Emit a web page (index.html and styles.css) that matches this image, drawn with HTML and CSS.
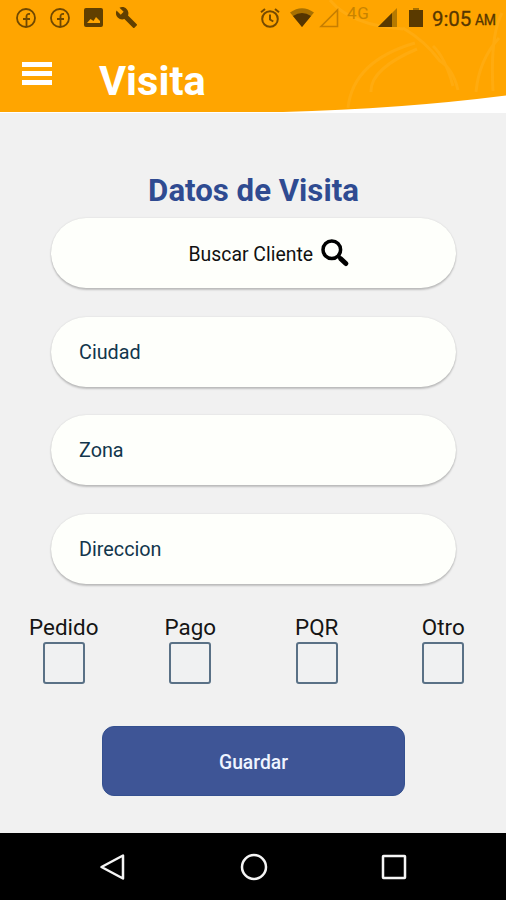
FILE: index.html
```html
<!DOCTYPE html>
<html lang="es">
<head>
<meta charset="utf-8">
<title>Visita</title>
<link rel="stylesheet" href="styles.css">
</head>
<body>
<div class="screen">
  <header class="header">
    <svg class="header-art" viewBox="0 0 506 113" aria-hidden="true">
      <path fill="#ffa500" d="M0 0H506V95.500Q400 109 283 112H0Z"/>
      <g fill="none" stroke="#ffb525" stroke-width="3" opacity=".4">
        <path d="M348 108Q353 61 415 43M371 92Q370 69 417 49M403 28Q425 41 440 61Q453 69 458 90M433 46Q445 57 453 86M502 13Q490 35 493 91M499 38Q479 60 476 92M330 0Q350 25 403 29"/>
      </g>
    </svg>
    <div class="status">
      <div class="status-left">
        <svg class="fb" viewBox="0 0 20 20"><circle cx="10" cy="10" r="9"/><path d="M10.500 19V8.500Q10.500 5.500 14 6M7 11H14"/></svg>
        <svg class="fb" viewBox="0 0 20 20"><circle cx="10" cy="10" r="9"/><path d="M10.500 19V8.500Q10.500 5.500 14 6M7 11H14"/></svg>
        <svg class="photo" viewBox="0 0 19 19"><path fill-rule="evenodd" d="M2 0H17Q19 0 19 2V17Q19 19 17 19H2Q0 19 0 17V2Q0 0 2 0ZM3 15H16V13L12 9L9.500 13L6.500 11Z"/></svg>
        <svg class="wrench" viewBox="0 0 24 24"><path d="M22.700 19L13.600 9.900C14.500 7.600 14 4.900 12.100 3C10.100 1 7.100.6 4.700 1.700L9 6L6 9L1.600 4.700C.4 7.100.9 10.100 2.900 12.100C4.800 14 7.500 14.500 9.800 13.600L18.900 22.700C19.300 23.100 19.900 23.100 20.300 22.700L22.600 20.400C23.100 20 23.100 19.300 22.700 19Z"/></svg>
      </div>
      <div class="status-right">
        <svg class="alarm" viewBox="0 0 20 20"><circle cx="10" cy="11" r="7.800"/><path d="M10 6.500V11.500L13.300 13.500M1 4.200L5 1M15 1L19 4.200"/></svg>
        <svg class="wifi" viewBox="0 0 24 20"><path fill="#a87000" d="M0 4.500Q12-4 24 4.500L12 19Z"/><path fill="#553500" d="M3 8Q12 2 21 8L12 19Z"/></svg>
        <svg class="signal-empty" viewBox="0 0 20 20"><path d="M18.500 2V18.500H2Z"/></svg>
        <span class="network">4G</span>
        <svg class="signal" viewBox="0 0 19 19"><path fill="#b57900" d="M19 0V19H0Z"/><path fill="#593900" d="M14 5V19H0Z"/></svg>
        <svg class="battery" viewBox="0 0 14 19"><path fill="#a87000" d="M4 0H10V2H4Z"/><path fill="#5a3a00" d="M0 2H14V19H0Z"/></svg>
        <span class="time">9:05</span><span class="ampm">AM</span>
      </div>
    </div>
    <div class="toolbar">
      <div class="menu"><i></i><i></i><i></i></div>
      <h1>Visita</h1>
    </div>
  </header>
  <main>
    <h2>Datos de Visita</h2>
    <div class="fields">
      <div class="field search"><span>Buscar Cliente</span>
        <svg viewBox="0 0 28 28"><circle cx="10.800" cy="10.800" r="8.800"/><path class="neck" d="M16.500 16.500L21 21"/><path class="handle" d="M20 20L24.800 24.500"/></svg>
      </div>
      <div class="field">Ciudad</div>
      <div class="field">Zona</div>
      <div class="field">Direccion</div>
    </div>
    <div class="checks">
      <label><span>Pedido</span><i class="box"></i></label>
      <label><span>Pago</span><i class="box"></i></label>
      <label><span>PQR</span><i class="box"></i></label>
      <label><span>Otro</span><i class="box"></i></label>
    </div>
    <button class="save">Guardar</button>
  </main>
  <nav class="nav">
    <svg viewBox="0 0 28 28"><path d="M24 2.500V25.500L2.500 14Z"/></svg>
    <svg viewBox="0 0 28 28"><circle cx="14" cy="14" r="12"/></svg>
    <svg viewBox="0 0 28 28"><rect x="3" y="3" width="22" height="22" rx=".5"/></svg>
  </nav>
</div>
</body>
</html>
```

FILE: styles.css
```css
* { box-sizing: border-box; }
body { margin: 0; font-family: Roboto, "Liberation Sans", sans-serif; }
svg { display: block; flex: none; }
.screen { width: 506px; height: 900px; display: flex; flex-direction: column; background: #f1f1f1; overflow: hidden; }
.header { position: relative; height: 113px; background: #fff; }
.header-art { position: absolute; left: 0; top: 0; width: 506px; height: 113px; }
.status { position: relative; display: flex; justify-content: space-between; height: 36px; padding: 0 10px 0 16px; color: #573700; }
.status-left, .status-right { display: flex; align-items: center; height: 35px; }
.fb { width: 20px; height: 20px; margin-right: 14px; fill: none; stroke: #704800; stroke-width: 1.8; }
.photo { width: 19px; height: 19px; margin-right: 12px; fill: #613f00; }
.wrench { width: 23px; height: 23px; fill: #613f00; }
.alarm { width: 20px; height: 20px; margin-right: 10px; fill: none; stroke: #754a00; stroke-width: 2; }
.wifi { width: 24px; height: 20px; margin-right: 5px; }
.signal-empty { width: 20px; height: 20px; margin-right: 8px; fill: none; stroke: #c77e00; stroke-width: 1.6; }
.network { width: 31px; font-size: 17px; line-height: 20px; letter-spacing: .8px; color: #c88300; margin-bottom: 9px; }
.signal { width: 19px; height: 19px; margin-right: 12px; }
.battery { width: 14px; height: 19px; margin-right: 9px; }
.time { width: 43px; font-size: 20.500px; line-height: 24px; letter-spacing: -.1px; margin-top: 2px; -webkit-text-stroke: .3px; }
.ampm { width: 21px; font-size: 14px; line-height: 20px; letter-spacing: -.5px; margin-top: 5px; -webkit-text-stroke: .3px; }
.toolbar { position: relative; display: flex; padding-left: 22px; }
.menu { display: flex; flex-direction: column; gap: 4px; width: 30px; margin: 26px 47px 0 0; }
.menu i { height: 5px; background: #fff; }
h1 { margin: 20px 0 0; color: #fff; font-size: 41.500px; line-height: 50px; font-weight: 700; }
main { flex: 1; display: flex; flex-direction: column; align-items: center; }
h2 { margin: 60px 0 0 1px; color: #2f4b91; font-size: 31.200px; line-height: 36px; font-weight: 700; }
.fields { display: flex; flex-direction: column; gap: 28.500px; width: 405px; margin-top: 9px; }
.field { display: flex; align-items: center; height: 70px; padding: 1px 28px 0 28.500px; border-radius: 35px; background: #fefffb; box-shadow: 0 2px 2px rgba(0, 0, 0, .2), 0 0 2px rgba(0, 0, 0, .12); font-size: 19.800px; color: #12364c; }
.search { gap: 8px; padding: 2px 0 0 138px; color: #111; font-size: 19.400px; }
.search svg { width: 28px; height: 28px; fill: none; stroke: #000; stroke-width: 3.500; margin-top: -3px; }
.search .handle { stroke-width: 5; stroke-linecap: round; }
.checks { display: grid; grid-template-columns: repeat(4, 126.500px); width: 506px; margin: 30px 0 0 1px; }
.checks label { display: flex; flex-direction: column; align-items: center; font-size: 22.400px; line-height: 26px; color: #151515; }
.box { width: 42px; height: 42px; margin-top: 2px; border: 2px solid #5a7186; border-radius: 3px; background: #f0f1f2; }
.save { width: 303px; height: 70px; margin: 42px 0 0 1px; border: 1px solid #34508f; border-radius: 12px; background: #3e5596; color: #eff4ff; font: 500 19.300px Roboto, sans-serif; padding: 3px 0 0; }
.nav { display: flex; justify-content: space-between; align-items: center; height: 67px; padding: 0 98px 0 99px; background: #000; }
.nav svg { width: 28px; height: 28px; fill: none; stroke: #f5f5f5; stroke-width: 2.500; stroke-linejoin: round; }
```
